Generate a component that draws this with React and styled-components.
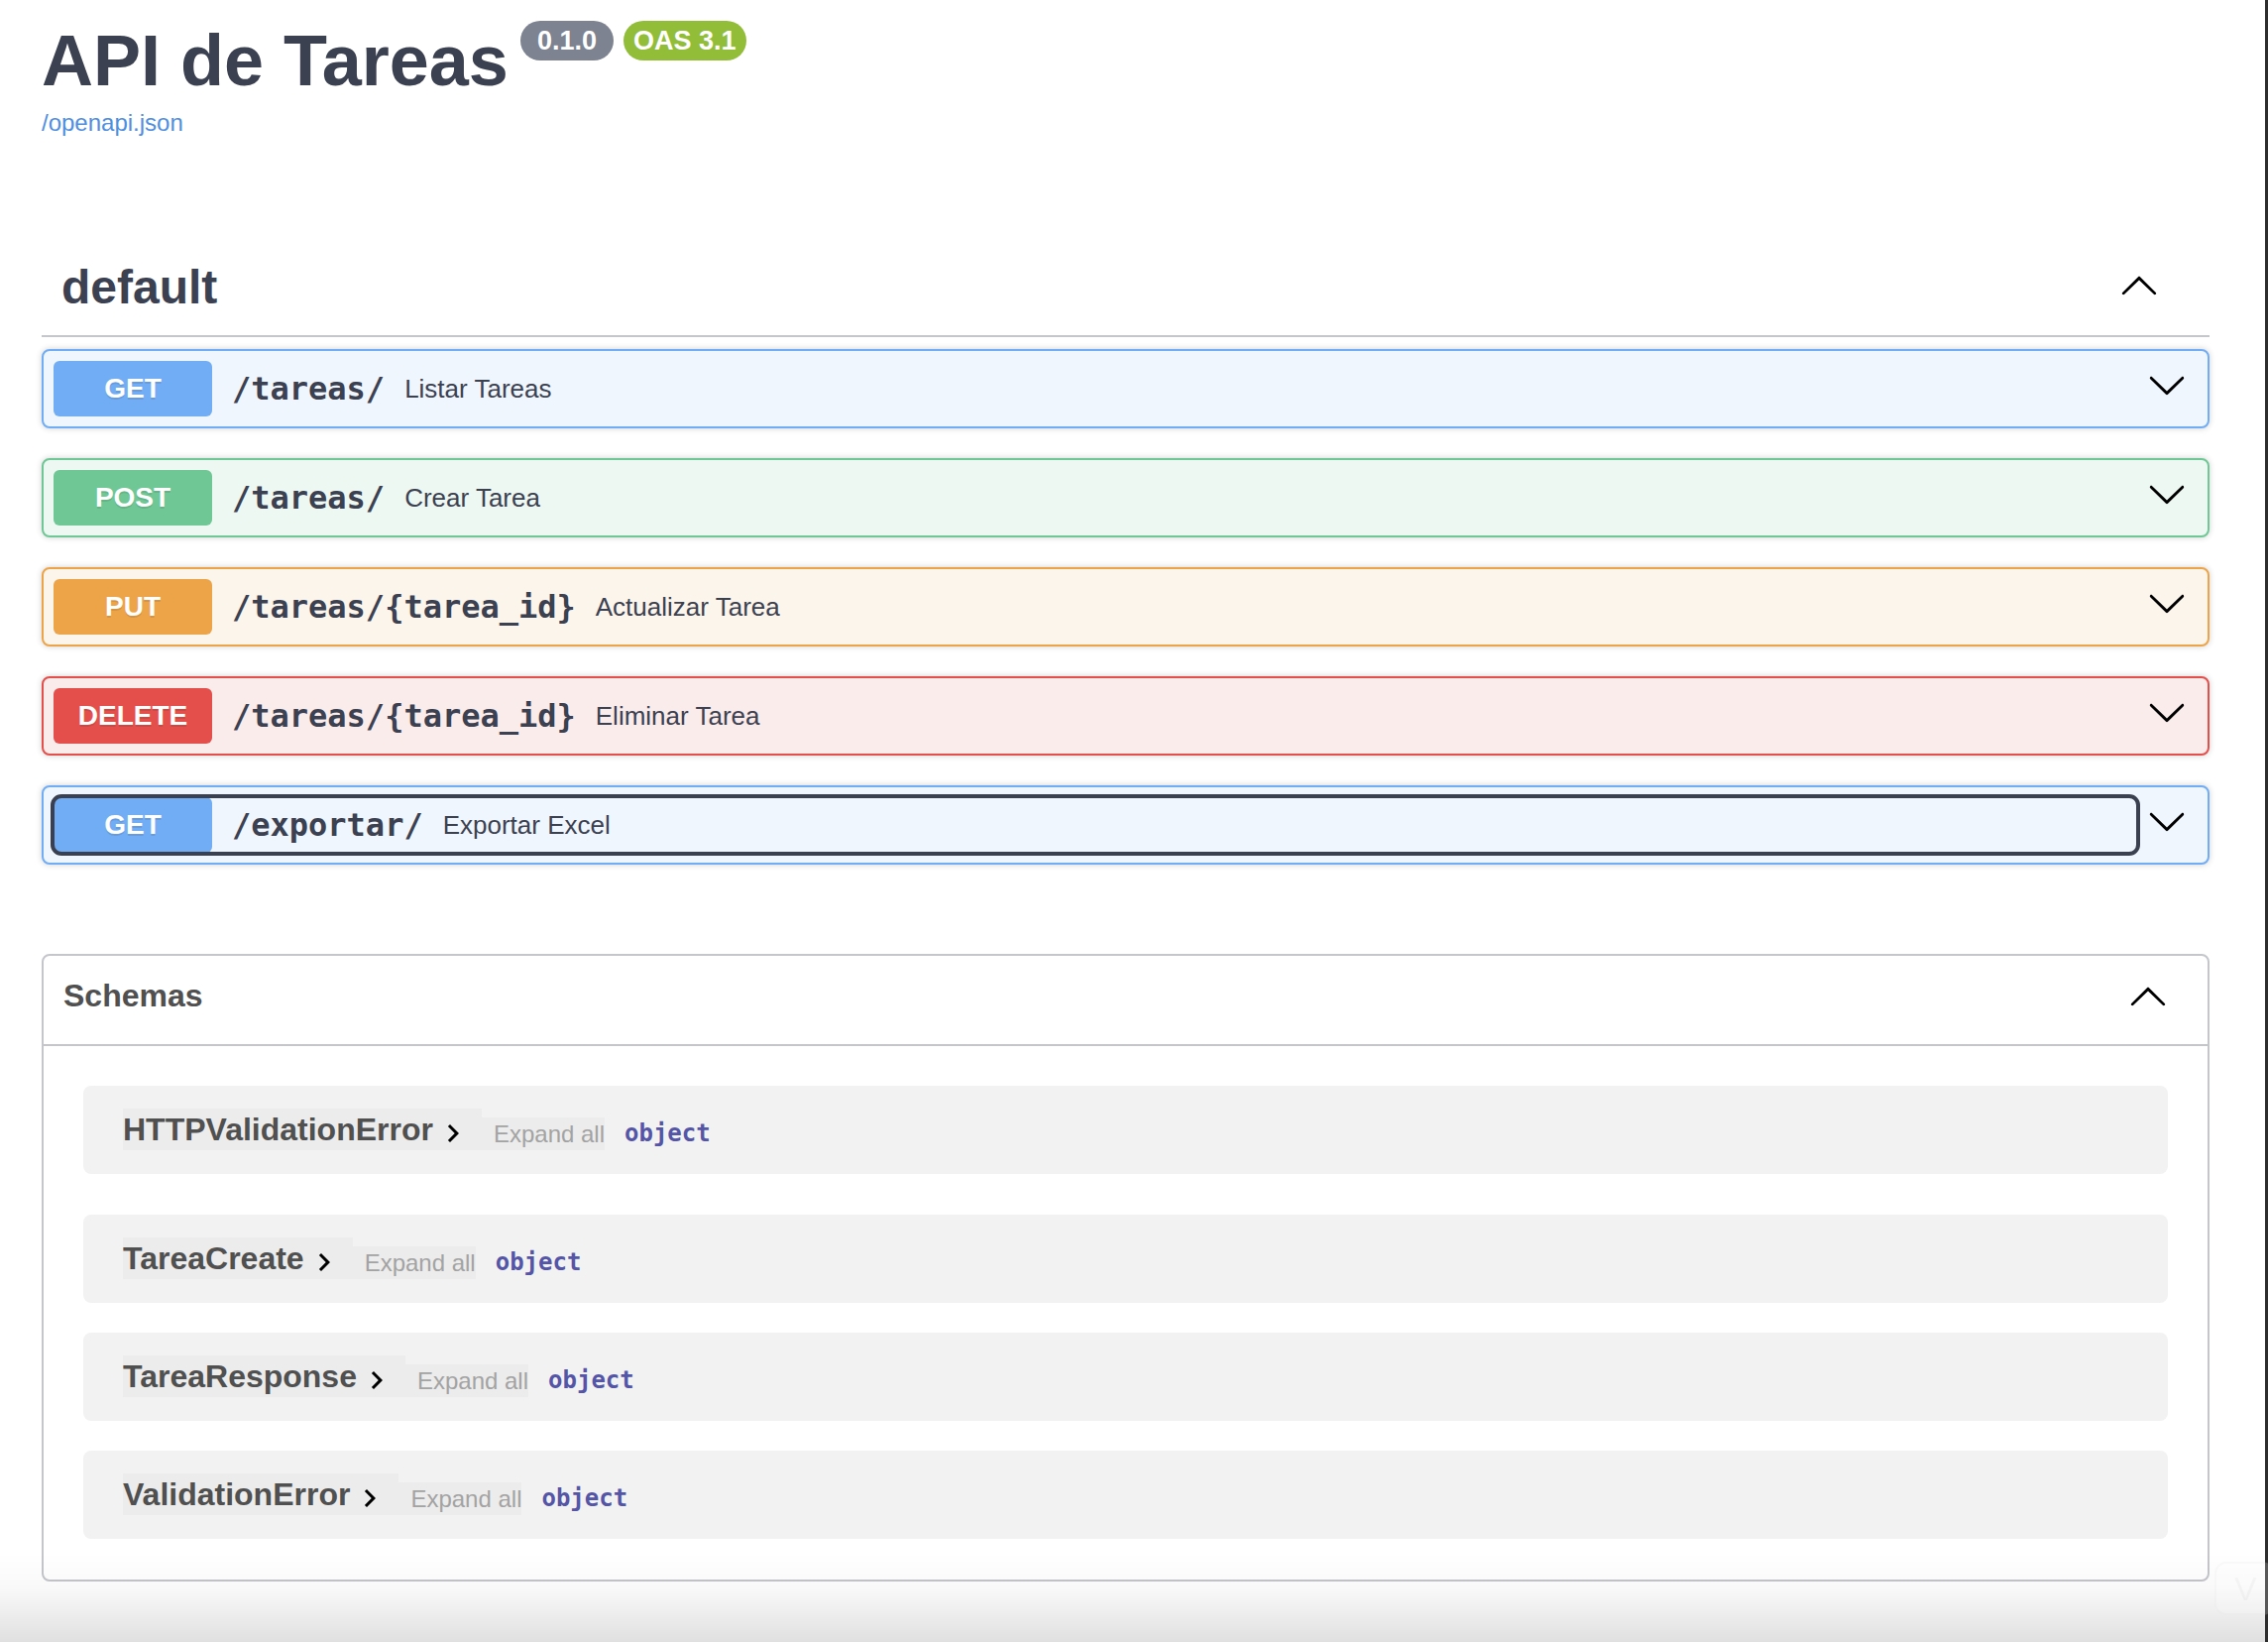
import React from 'react'
import styled, { createGlobalStyle } from 'styled-components'

const GlobalStyle = createGlobalStyle`
  html, body {
    margin: 0;
    padding: 0;
    background: #fff;
  }
  body {
    width: 2288px;
    height: 1656px;
    overflow: hidden;
    font-family: "Liberation Sans", Arial, sans-serif;
  }
  * { box-sizing: border-box; }
`

const SANS = `"Liberation Sans", Arial, sans-serif`
const MONO = `"DejaVu Sans Mono", "Liberation Mono", monospace`
const INK = '#3b4151'
const LINE = '#c4c6cb'

const methods = {
  GET: { main: '#71adf5', bg: '#f0f6fe' },
  POST: { main: '#6ec794', bg: '#eef8f3' },
  PUT: { main: '#eda449', bg: '#fcf5eb' },
  DELETE: { main: '#e54f4b', bg: '#fbecec' },
}

const Page = styled.div`
  min-height: 1656px;
  padding: 0 56px 0 42px;
  border-right: 3px solid #2d2d2d;
  display: flex;
  flex-direction: column;
`

const Info = styled.header`
  margin-top: 21px;
  display: flex;
  flex-direction: column;
`

const TitleRow = styled.div`
  display: flex;
  align-items: flex-start;
`

const Title = styled.h2`
  margin: 0;
  font-family: ${SANS};
  font-size: 72px;
  line-height: 80px;
  font-weight: 700;
  color: ${INK};
`

const Badge = styled.span`
  height: 40px;
  line-height: 40px;
  padding: 0 ${(p) => p.$pad}px;
  margin-left: ${(p) => p.$gap}px;
  border-radius: 20px;
  background: ${(p) => p.$bg};
  color: #fff;
  font-family: ${SANS};
  font-weight: 700;
  font-size: 27px;
  white-space: nowrap;
`

const SpecLink = styled.a`
  margin-top: 9px;
  font-family: ${SANS};
  font-size: 24px;
  line-height: 28px;
  color: #4f8ee0;
  text-decoration: none;
`

const TagHeader = styled.div`
  margin-top: 104px;
  display: flex;
  align-items: center;
  padding: 20px 51px 20px 20px;
  border-bottom: 2px solid ${LINE};

  h3 {
    flex: 1;
    margin: 0;
    font-family: ${SANS};
    font-size: 48px;
    line-height: 56px;
    font-weight: 700;
    color: ${INK};
  }

  svg {
    margin-bottom: 6px;
  }
`

const OpList = styled.div`
  margin-top: 12px;
  display: flex;
  flex-direction: column;
  gap: 30px;
`

const Opblock = styled.div`
  display: flex;
  align-items: center;
  padding: 10px;
  border: 2px solid ${(p) => p.$c.main};
  background: ${(p) => p.$c.bg};
  border-radius: 8px;
  box-shadow: 0 0 6px rgba(0, 0, 0, 0.19);
`

const SummaryControl = styled.div`
  flex: 1;
  display: flex;
  align-items: center;
  border-radius: 8px;
  outline: ${(p) => (p.$focused ? `4px solid #3b4050` : 'none')};
  outline-offset: -1px;
`

const Method = styled.span`
  min-width: 160px;
  padding: 12px 0;
  border-radius: 6px;
  background: ${(p) => p.$c};
  color: #fff;
  text-align: center;
  font-family: ${SANS};
  font-size: 28px;
  line-height: 32px;
  font-weight: 700;
  text-shadow: 0 2px 0 rgba(0, 0, 0, 0.1);
`

const Path = styled.span`
  padding: 0 20px;
  font-family: ${MONO};
  font-size: 32px;
  font-weight: 700;
  color: ${INK};
  white-space: nowrap;
`

const Desc = styled.span`
  flex: 1;
  font-family: ${SANS};
  font-size: 26px;
  color: ${INK};
`

const ArrowBtn = styled.span`
  display: flex;
  padding: 0 11px 0 10px;
  svg {
    margin-bottom: 8px;
  }
`

const Models = styled.section`
  margin-top: 90px;
  border: 2px solid ${LINE};
  border-radius: 8px;
`

const ModelsHeader = styled.div`
  display: flex;
  align-items: center;
  padding: 20px 40px 29px 20px;
  border-bottom: 2px solid ${LINE};

  h4 {
    flex: 1;
    margin: 0;
    font-family: ${SANS};
    font-size: 32px;
    line-height: 37px;
    font-weight: 700;
    color: #505050;
  }
`

const ModelsBody = styled.div`
  padding: 40px 40px 41px;
  display: flex;
  flex-direction: column;
`

const ModelRow = styled.div`
  display: flex;
  align-items: flex-end;
  padding: 23px 40px 24px;
  background: #f2f2f2;
  border-radius: 8px;
  margin-bottom: 30px;

  &:first-child { margin-bottom: 41px; }
  &:last-child { margin-bottom: 0; }
`

const ModelTitle = styled.span`
  display: flex;
  align-items: center;
  height: 42px;
  padding-right: 11px;
  background: rgba(0, 0, 0, 0.022);
  font-family: ${SANS};
  font-size: 32px;
  line-height: 37px;
  font-weight: 700;
  color: #505050;

  svg {
    margin: 8px 0 0 2px;
  }
`

const ExpandAll = styled.span`
  height: 33px;
  line-height: 33px;
  padding-left: 12px;
  background: rgba(0, 0, 0, 0.022);
  font-family: ${SANS};
  font-size: 24px;
  color: #a3a3a3;
`

const TypeLabel = styled.span`
  margin-left: 20px;
  height: 33px;
  line-height: 33px;
  font-family: ${MONO};
  font-size: 24px;
  font-weight: 700;
  color: #5555a8;
`

const BottomFade = styled.div`
  position: fixed;
  left: 0;
  right: 3px;
  bottom: 0;
  height: 90px;
  pointer-events: none;
  background: linear-gradient(to bottom, rgba(0, 0, 0, 0), rgba(0, 0, 0, 0.025) 40%, rgba(0, 0, 0, 0.12));
`

const GhostButton = styled.div`
  position: fixed;
  left: 2234px;
  top: 1575px;
  width: 60px;
  height: 54px;
  border-radius: 12px;
  border: 2px solid rgba(0, 0, 0, 0.02);
  background: rgba(255, 255, 255, 0.2);
  color: rgba(0, 0, 0, 0.03);
  font-family: ${SANS};
  font-size: 34px;
  display: flex;
  align-items: center;
  padding-left: 18px;
`

const ChevronDown = () => (
  <svg width="40" height="40" viewBox="0 0 20 20" fill="#000">
    <path d="M17.418 6.109c.272-.268.709-.268.979 0s.271.701 0 .969l-7.908 7.83c-.27.268-.707.268-.979 0l-7.908-7.83c-.27-.268-.27-.701 0-.969.271-.268.709-.268.979 0L10 13.25l7.418-7.141z" />
  </svg>
)

const ChevronUp = () => (
  <svg width="40" height="40" viewBox="0 0 20 20" fill="#000">
    <path d="M17.418 14.908c.272.268.709.268.979 0s.271-.701 0-.969l-7.908-7.83c-.27-.268-.707-.268-.979 0l-7.908 7.83c-.27.268-.27.701 0 .969.271.268.709.268.979 0L10 7.767l7.418 7.141z" />
  </svg>
)

const ChevronRight = () => (
  <svg width="36" height="36" viewBox="0 0 24 24" fill="#000">
    <path d="M10 6 8.59 7.41 13.17 12l-4.58 4.59L10 18l6-6z" />
  </svg>
)

const operations = [
  { method: 'GET', path: '/tareas/', summary: 'Listar Tareas' },
  { method: 'POST', path: '/tareas/', summary: 'Crear Tarea' },
  { method: 'PUT', path: '/tareas/{tarea_id}', summary: 'Actualizar Tarea' },
  { method: 'DELETE', path: '/tareas/{tarea_id}', summary: 'Eliminar Tarea' },
  { method: 'GET', path: '/exportar/', summary: 'Exportar Excel', focused: true },
]

const schemas = ['HTTPValidationError', 'TareaCreate', 'TareaResponse', 'ValidationError']

const App = () => {
  return (
    <>
      <GlobalStyle />
      <Page>
        <Info>
          <TitleRow>
            <Title>API de Tareas</Title>
            <Badge $bg="#7d8391" $pad={17} $gap={12}>0.1.0</Badge>
            <Badge $bg="#92bd39" $pad={10} $gap={10}>OAS 3.1</Badge>
          </TitleRow>
          <SpecLink href="#">/openapi.json</SpecLink>
        </Info>

        <TagHeader>
          <h3>default</h3>
          <ChevronUp />
        </TagHeader>

        <OpList>
          {operations.map((op, i) => {
            const c = methods[op.method]
            return (
              <Opblock key={i} $c={c}>
                <SummaryControl $focused={op.focused}>
                  <Method $c={c.main}>{op.method}</Method>
                  <Path>{op.path}</Path>
                  <Desc>{op.summary}</Desc>
                </SummaryControl>
                <ArrowBtn>
                  <ChevronDown />
                </ArrowBtn>
              </Opblock>
            )
          })}
        </OpList>

        <Models>
          <ModelsHeader>
            <h4>Schemas</h4>
            <ChevronUp />
          </ModelsHeader>
          <ModelsBody>
            {schemas.map((name) => (
              <ModelRow key={name}>
                <ModelTitle>
                  {name}
                  <ChevronRight />
                </ModelTitle>
                <ExpandAll>Expand all</ExpandAll>
                <TypeLabel>object</TypeLabel>
              </ModelRow>
            ))}
          </ModelsBody>
        </Models>
      </Page>
      <BottomFade />
      <GhostButton>V</GhostButton>
    </>
  )
}

export default App
